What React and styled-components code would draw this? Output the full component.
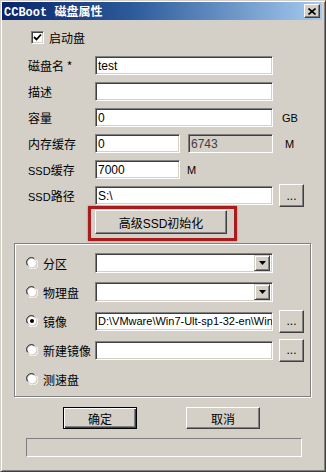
import React from "react";
import styled, { createGlobalStyle } from "styled-components";

const GlobalStyle = createGlobalStyle`
  html, body {
    margin: 0;
    padding: 0;
    background: #d4d0c8;
  }
  body {
    font-family: "Liberation Sans", "Noto Sans CJK SC", sans-serif;
    font-size: 12px;
    color: #000;
  }
  * { box-sizing: border-box; }
`;

const Window = styled.div`
  width: 326px;
  height: 472px;
  background: #d4d0c8;
  border: 1px solid;
  border-color: #d4d0c8 #404040 #404040 #d4d0c8;
  box-shadow: inset 1px 1px 0 #fff, inset -1px -1px 0 #808080;
  padding: 1px 3px 2px 1px;
  display: flex;
  flex-direction: column;
`;

const TitleBar = styled.div`
  height: 18px;
  display: flex;
  align-items: center;
  justify-content: space-between;
  padding: 0 2px 0 2px;
  background: linear-gradient(to right, #0a246a, #2b5a9a 40%, #a6caf0);
`;

const Title = styled.span`
  font-family: "Liberation Mono", "Noto Sans CJK SC", monospace;
  font-weight: bold;
  font-size: 12px;
  color: #fff;
  white-space: pre;
`;

const CloseBtn = styled.div`
  width: 16px;
  height: 14px;
  display: flex;
  align-items: center;
  justify-content: center;
  background: #d4d0c8;
  border: 1px solid;
  border-color: #fff #404040 #404040 #fff;
  box-shadow: inset -1px -1px 0 #808080;
`;

const Body = styled.div`
  display: flex;
  flex-direction: column;
`;

const CheckRow = styled.label`
  display: flex;
  align-items: center;
  gap: 5px;
  height: 13px;
  margin: 11px 0 0 29px;
  font-family: "Noto Sans CJK SC", sans-serif;
`;

const Box = styled.span`
  width: 13px;
  height: 13px;
  display: flex;
  align-items: center;
  justify-content: center;
  background: #fff;
  border: 1px solid;
  border-color: #808080 #fff #fff #808080;
  box-shadow: inset 1px 1px 0 #404040, inset -1px -1px 0 #d4d0c8;
`;

const Form = styled.div`
  display: flex;
  flex-direction: column;
  gap: 7px;
  margin: 12px 0 0 26px;
`;

const Row = styled.div`
  display: flex;
  align-items: center;
  height: ${(p) => p.$h || 19}px;
`;

const Label = styled.span`
  width: 67px;
  flex: none;
  font-family: "Noto Sans CJK SC", sans-serif;
  font-size: 12px;
  white-space: nowrap;
`;

const Latin = styled.span`
  font-family: "Liberation Sans", sans-serif;
  font-size: 11px;
`;

const Input = styled.div`
  width: ${(p) => p.$w}px;
  height: ${(p) => p.$h || 19}px;
  flex: none;
  display: flex;
  align-items: center;
  margin-left: ${(p) => p.$ml || 0}px;
  padding: 0 2px;
  overflow: hidden;
  white-space: nowrap;
  font-family: "Liberation Sans", sans-serif;
  font-size: ${(p) => p.$fs || 12}px;
  color: ${(p) => (p.$disabled ? "#404040" : "#000")};
  background: ${(p) => (p.$disabled ? "#d4d0c8" : "#fff")};
  border: 1px solid;
  border-color: #808080 #fff #fff #808080;
  box-shadow: inset 1px 1px 0 #404040, inset -1px -1px 0 #d4d0c8;
`;

const Unit = styled.span`
  margin-left: ${(p) => p.$ml}px;
  font-family: "Liberation Sans", sans-serif;
  font-size: 11px;
`;

const Button = styled.div`
  width: ${(p) => p.$w}px;
  height: ${(p) => p.$h}px;
  flex: none;
  display: flex;
  align-items: center;
  justify-content: center;
  margin-left: ${(p) => p.$ml || 0}px;
  font-family: "Liberation Sans", "Noto Sans CJK SC", sans-serif;
  font-size: 12px;
  background: #d4d0c8;
  border: 1px solid;
  border-color: ${(p) => (p.$default ? "#000" : "#fff #404040 #404040 #fff")};
  box-shadow: ${(p) =>
    p.$default
      ? "inset 1px 1px 0 #fff, inset -1px -1px 0 #404040, inset -2px -2px 0 #808080"
      : "inset -1px -1px 0 #808080, inset 1px 1px 0 #d4d0c8"};
`;

const Highlight = styled.div`
  align-self: flex-start;
  margin: 1px 0 0 86px;
  padding: 1px 7px 4px 4px;
  border: 3px solid #a81c1c;
  box-shadow: 0 0 2px rgba(150, 20, 20, 0.45);
`;

const Group = styled.div`
  width: 297px;
  margin: 2px 0 0 12px;
  padding: 9px 0 7px 11px;
  border: 1px solid #808080;
  box-shadow: inset 1px 1px 0 #fff, 1px 1px 0 #fff;
  display: flex;
  flex-direction: column;
  gap: 9px;
`;

const RadioLabel = styled.span`
  width: 69px;
  flex: none;
  display: flex;
  align-items: center;
  gap: 5px;
  font-family: "Noto Sans CJK SC", sans-serif;
  font-size: 12px;
  white-space: nowrap;
`;

const Combo = styled(Input)`
  justify-content: flex-end;
  padding: 2px;
`;

const DropBtn = styled.div`
  width: 16px;
  height: 16px;
  display: flex;
  align-items: center;
  justify-content: center;
  background: #d4d0c8;
  border: 1px solid;
  border-color: #d4d0c8 #404040 #404040 #d4d0c8;
  box-shadow: inset 1px 1px 0 #fff, inset -1px -1px 0 #808080;
`;

const Actions = styled.div`
  display: flex;
  gap: 49px;
  margin: 10px 0 0 61px;
`;

const Status = styled.div`
  width: 276px;
  height: 19px;
  margin: 9px 0 0 24px;
  border: 1px solid;
  border-color: #808080 #fff #fff #808080;
`;

function Radio({ checked }) {
  return (
    <svg width="12" height="12" viewBox="0 0 12 12">
      <path d="M1 8 A5.2 5.2 0 0 1 8 1" fill="none" stroke="#808080" />
      <path d="M2 8.5 A4.2 4.2 0 0 1 8.5 2" fill="none" stroke="#404040" />
      <circle cx="6" cy="6" r="4.2" fill="#fff" />
      <path d="M3 10.5 A5.2 5.2 0 0 0 10.5 3" fill="none" stroke="#fff" />
      {checked && <circle cx="6" cy="6" r="2" fill="#000" />}
    </svg>
  );
}

function Arrow() {
  return (
    <svg width="7" height="4" viewBox="0 0 7 4">
      <path d="M0 0 H7 L3.5 4 Z" fill="#000" />
    </svg>
  );
}

export default function App() {
  return (
    <>
      <GlobalStyle />
      <Window>
        <TitleBar>
          <Title>CCBoot 磁盘属性</Title>
          <CloseBtn>
            <svg width="8" height="7" viewBox="0 0 8 7">
              <path d="M0.5 0.5 L7.5 6.5 M7.5 0.5 L0.5 6.5" stroke="#000" strokeWidth="1.6" />
            </svg>
          </CloseBtn>
        </TitleBar>
        <Body>
          <CheckRow>
            <Box>
              <svg width="9" height="9" viewBox="0 0 9 9">
                <path d="M1 4 L3.5 6.5 L8 1.5" fill="none" stroke="#000" strokeWidth="1.8" />
              </svg>
            </Box>
            启动盘
          </CheckRow>
          <Form>
            <Row>
              <Label>磁盘名 *</Label>
              <Input $w={178}>test</Input>
            </Row>
            <Row>
              <Label>描述</Label>
              <Input $w={178} />
            </Row>
            <Row>
              <Label>容量</Label>
              <Input $w={178}>0</Input>
              <Unit $ml={9}>GB</Unit>
            </Row>
            <Row>
              <Label>内存缓存</Label>
              <Input $w={85}>0</Input>
              <Input $w={85} $ml={8} $disabled>6743</Input>
              <Unit $ml={12}>M</Unit>
            </Row>
            <Row>
              <Label><Latin>SSD</Latin>缓存</Label>
              <Input $w={85}>7000</Input>
              <Unit $ml={7}>M</Unit>
            </Row>
            <Row>
              <Label><Latin>SSD</Latin>路径</Label>
              <Input $w={178}>S:\</Input>
              <Button $w={25} $h={23} $ml={6}>...</Button>
            </Row>
          </Form>
          <Highlight>
            <Button $w={132} $h={24}>高级SSD初始化</Button>
          </Highlight>
          <Group>
            <Row $h={20}>
              <RadioLabel><Radio />分区</RadioLabel>
              <Combo $w={178} $h={20}><DropBtn><Arrow /></DropBtn></Combo>
            </Row>
            <Row $h={20}>
              <RadioLabel><Radio />物理盘</RadioLabel>
              <Combo $w={178} $h={20}><DropBtn><Arrow /></DropBtn></Combo>
            </Row>
            <Row $h={20}>
              <RadioLabel><Radio checked />镜像</RadioLabel>
              <Input $w={178} $fs={11}>D:\VMware\Win7-Ult-sp1-32-en\Win</Input>
              <Button $w={25} $h={23} $ml={6}>...</Button>
            </Row>
            <Row $h={20}>
              <RadioLabel><Radio />新建镜像</RadioLabel>
              <Input $w={178} />
              <Button $w={25} $h={23} $ml={6}>...</Button>
            </Row>
            <Row $h={20}>
              <RadioLabel><Radio />测速盘</RadioLabel>
            </Row>
          </Group>
          <Actions>
            <Button $w={74} $h={22} $default>确定</Button>
            <Button $w={74} $h={22}>取消</Button>
          </Actions>
          <Status />
        </Body>
      </Window>
    </>
  );
}
